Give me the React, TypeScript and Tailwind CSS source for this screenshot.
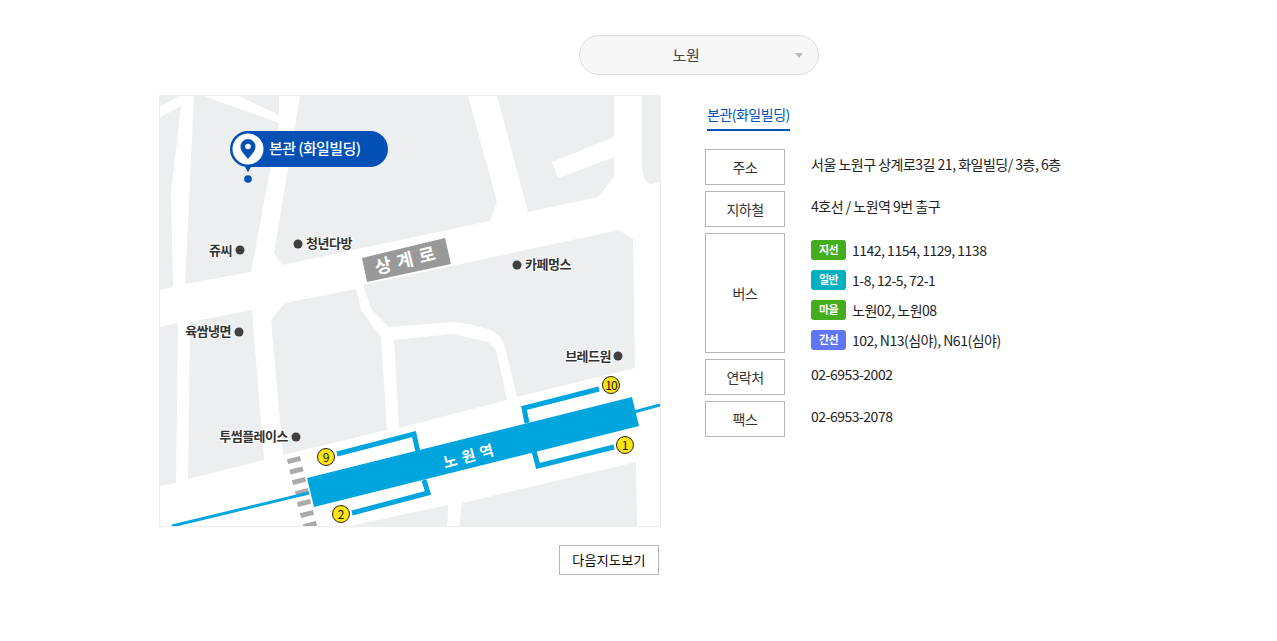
import React from "react";

const blocks = [
  "159,96 180,96 159,107",
  "159,118 181,106 171,193 173,287 159,290",
  "194,96 204,96 279,123 251,272 185,284",
  "239,96 279,96 279,115",
  "300,96 468,96 497,202 490,221 282,265 274,253",
  "497,96 614,96 614,137 552,162 558,178 614,157 614,177 598,197 528,212",
  "159,327 178,323 176,483 159,486",
  "190,322 252,310 264,460 188,479",
  "271,320 285,303 356,289 361,310 381,337 387,430 283,455",
  "394,340 452,334 488,342 496,350 507,400 399,428",
  "345,527 448,505 447,527",
  "462,503 636,462 637,527 459,527",
];

const places = [
  { name: "쥬씨", x: 232, y: 255, anchor: "end" },
  { name: "청년다방", x: 306, y: 248, anchor: "start" },
  { name: "카페멍스", x: 525, y: 269, anchor: "start" },
  { name: "육쌈냉면", x: 231, y: 336, anchor: "end" },
  { name: "브레드원", x: 611, y: 361, anchor: "end" },
  { name: "투썸플레이스", x: 288, y: 441, anchor: "end" },
];

const dots = [
  [240, 250],
  [298, 244],
  [517, 265],
  [239, 332],
  [618, 356],
  [296, 437],
];

const exits = [
  { no: "9", x: 326, y: 457 },
  { no: "2", x: 341, y: 514 },
  { no: "10", x: 611, y: 385 },
  { no: "1", x: 625, y: 445 },
];

const crosswalk = [
  [294, 460],
  [296.5, 470.5],
  [299, 481],
  [302, 492],
  [304, 503],
  [307, 514],
  [310, 525],
];

const buses = [
  { type: "지선", color: "bg-[#43ad1e]", lines: "1142, 1154, 1129, 1138" },
  { type: "일반", color: "bg-[#00afc0]", lines: "1-8, 12-5, 72-1" },
  { type: "마을", color: "bg-[#43ad1e]", lines: "노원02, 노원08" },
  { type: "간선", color: "bg-[#6276f5]", lines: "102, N13(심야), N61(심야)" },
];

const MapDrawing = () => (
  <svg width="500" height="430" viewBox="160 96 500 430" className="block" style={{ fontFamily: "'Noto Sans CJK KR', sans-serif" }}>
    <rect x="160" y="96" width="500" height="430" fill="#fff" />
    {blocks.map((points, i) => (
      <polygon key={i} points={points} fill="#edeef0" />
    ))}
    <path d="M642 96V167Q644 184 651 184L660 182V96Z" fill="#edeef0" />
    <path d="M372 310L389 327L453 322Q474 324 490 330Q502 335 505 347L517 397L635 368L633 239L619 230L363 285Z" fill="#edeef0" />
    <path d="M410 517L448 508L447 527H410Z" fill="#edeef0" />

    {/* crosswalk */}
    {crosswalk.map(([x, y], i) => (
      <line key={i} x1={x - 6.5} y1={y + 1.7} x2={x + 6.5} y2={y - 1.7} stroke="#aaaaaa" strokeWidth="5" />
    ))}

    {/* track and exits */}
    <path d="M172 526L309 493M634 412L660 405" stroke="#00a5de" strokeWidth="3" fill="none" />
    <path d="M337 454L414 434L418 452M352 513L428 493L424 480M599 389L524 408L527 423M614 447L538 466L534 451" stroke="#00a5de" strokeWidth="5" fill="none" />
    <polygon points="307,478 632,397 639,426 314,507" fill="#00a5de" />
    <text x="471" y="461" fill="#fff" fontSize="15" fontWeight="700" textAnchor="middle" transform="rotate(-15 471 456)" letterSpacing="5">
      노원역
    </text>

    {exits.map((e) => (
      <g key={e.no}>
        <circle cx={e.x} cy={e.y} r="8.5" fill="#ffe414" stroke="#222" strokeWidth="1" />
        <text x={e.x} y={e.y + 4.500} fontSize="12" textAnchor="middle" fill="#111" letterSpacing={e.no === "10" ? "-1" : "0"}>
          {e.no}
        </text>
      </g>
    ))}

    {/* road name */}
    <polygon points="362,258 445,238 451,264 367,282" fill="#999999" />
    <text x="408" y="266.500" fill="#fff" fontSize="18" fontWeight="700" textAnchor="middle" transform="rotate(-14 407 260)" letterSpacing="6">
      상계로
    </text>

    {/* places */}
    {dots.map(([x, y], i) => (
      <circle key={i} cx={x} cy={y} r="4.5" fill="#3f3f3f" />
    ))}
    {places.map((p) => (
      <text
        key={p.name}
        x={p.x}
        y={p.y}
        fontSize="13"
        fontWeight="700"
        fill="#333"
        stroke="#fff"
        strokeWidth="2"
        textAnchor={p.anchor as "start" | "end"}
        style={{ paintOrder: "stroke" }}
      >
        {p.name}
      </text>
    ))}

    {/* marker */}
    <rect x="230" y="131" width="158" height="36" rx="18" fill="#0050b5" />
    <circle cx="248" cy="149" r="15.5" fill="#fff" />
    <path d="M245 167H251L248 172Z" fill="#0050b5" />
    <circle cx="248" cy="179" r="3.8" fill="#0050b5" />
    <path d="M248 159C244 154 240.500 150.500 240.500 146.500A7.500 7.500 0 0 1 255.500 146.500C255.500 150.500 252 154 248 159Z" fill="#0050b5" />
    <circle cx="248" cy="146.500" r="2.800" fill="#fff" />
    <text x="269" y="154" fontSize="15" fontWeight="500" fill="#fff" letterSpacing="-0.6">
      본관 (화일빌딩)
    </text>
  </svg>
);

const Label = ({ h, children }: { h: string; children: React.ReactNode }) => (
  <div className={`flex w-20 shrink-0 items-center justify-center border border-[#b5b5b5] text-sm text-[#333] ${h}`}>{children}</div>
);

export default function App() {
  return (
    <div className="h-[641px] bg-white pl-[159px] pt-[35px] text-sm tracking-[-0.5px] text-[#222]" style={{ fontFamily: "'Noto Sans CJK KR', sans-serif" }}>
      <div className="ml-[420px] flex h-10 w-60 items-center rounded-full border border-[#dddddd] bg-[#f7f7f7]">
        <span className="flex-1 pr-[3px] text-center text-[15px] tracking-[-0.3px] text-[#444]">노원</span>
        <span className="mr-[15px] h-0 w-0 border-x-4 border-t-[5px] border-x-transparent border-t-[#bbbbbb]" />
      </div>

      <div className="mt-5 flex">
        <div className="w-[502px]">
          <div className="border border-[#eeeeee]">
            <MapDrawing />
          </div>
          <div className="mt-[18px] flex justify-end pr-[2px]">
            <div className="flex h-[30px] w-[100px] items-center justify-center border border-[#b5b5b5] text-[13px] tracking-[0.3px] text-black">다음지도보기</div>
          </div>
        </div>

        <div className="ml-11">
          <div className="ml-[2px] inline-block border-b-2 border-[#0050b5] pb-1 pt-[9px] leading-[21px] text-[#0050b5]">본관(화일빌딩)</div>
          <div className="mt-[18px] flex flex-col gap-[6px]">
            <div className="flex gap-[26px]">
              <Label h="h-9">주소</Label>
              <p className="pt-[5px] leading-[21px]">서울 노원구 상계로3길 21, 화일빌딩/ 3층, 6층</p>
            </div>
            <div className="flex gap-[26px]">
              <Label h="h-9">지하철</Label>
              <p className="pt-[5px] leading-[21px]">4호선 / 노원역 9번 출구</p>
            </div>
            <div className="flex gap-[26px]">
              <Label h="h-[120px]">버스</Label>
              <div className="flex flex-col gap-[10px] pt-[7px]">
                {buses.map((bus) => (
                  <div key={bus.type} className="flex h-5 items-center gap-[6px]">
                    <span className={`flex h-5 w-[35px] items-center justify-center rounded-[3px] text-[11px] font-bold tracking-[-0.5px] text-white ${bus.color}`}>{bus.type}</span>
                    <span className="leading-[21px]">{bus.lines}</span>
                  </div>
                ))}
              </div>
            </div>
            <div className="flex gap-[26px]">
              <Label h="h-9">연락처</Label>
              <p className="pt-[5px] leading-[21px]">02-6953-2002</p>
            </div>
            <div className="flex gap-[26px]">
              <Label h="h-9">팩스</Label>
              <p className="pt-[5px] leading-[21px]">02-6953-2078</p>
            </div>
          </div>
        </div>
      </div>
    </div>
  );
}
